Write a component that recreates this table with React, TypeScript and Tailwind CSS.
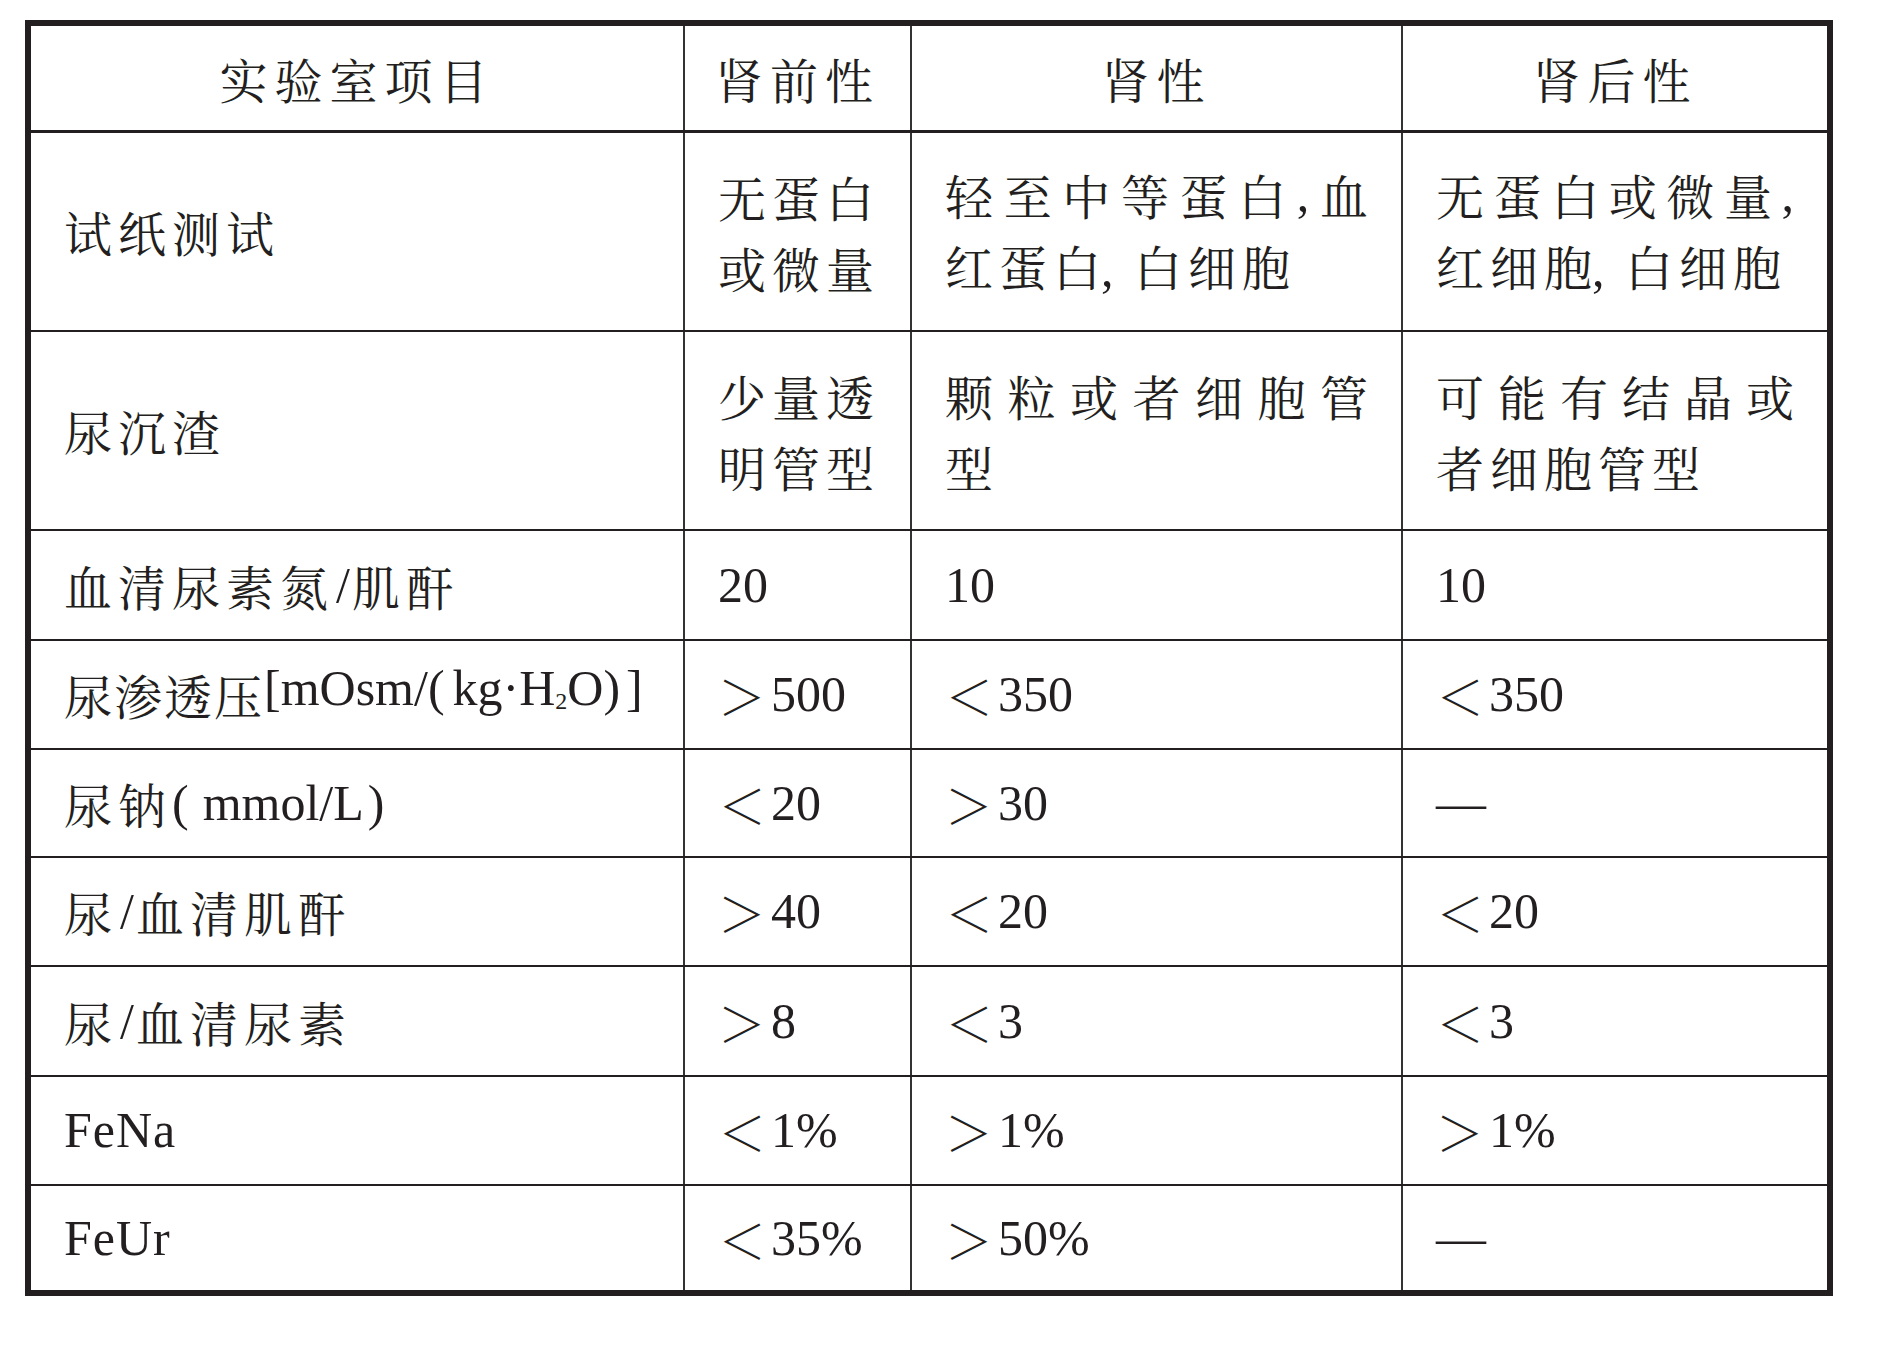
import React from "react";

const LAT = "font-['Liberation_Serif',serif] tracking-normal text-[50px]";
const C1 = "w-[654px] shrink-0 border-r-2 border-[#333333] flex items-center pl-[33px] whitespace-nowrap";
const C2 = "w-[227px] shrink-0 border-r-2 border-[#333333] flex items-center pl-[33px] whitespace-nowrap";
const C3 = "w-[491px] shrink-0 border-r-2 border-[#333333] flex items-center pl-[33px] pr-[33px] whitespace-nowrap";
const C4 = "flex-1 flex items-center pl-[33px] pr-[33px] whitespace-nowrap";

function Lt() {
  return <span className="inline-block w-[53px] tracking-normal">＜</span>;
}
function Gt() {
  return <span className="inline-block w-[53px] tracking-normal">＞</span>;
}
function N({ children }: { children: React.ReactNode }) {
  return <span className={LAT}>{children}</span>;
}
function Comma() {
  return <span className={LAT + " inline-block w-[33px]"}>,</span>;
}
function J({ t }: { t: string }) {
  return (
    <div className="flex w-full justify-between tracking-normal">
      {[...t].map((ch, i) =>
        ch === "," ? (
          <span key={i} className={LAT}>,</span>
        ) : (
          <span key={i}>{ch}</span>
        )
      )}
    </div>
  );
}
function Slash() {
  return <span className={LAT + " mx-[2px]"}>/</span>;
}

function Row({ cls, children }: { cls: string; children: React.ReactNode }) {
  return <div className={"flex " + cls}>{children}</div>;
}

export default function App() {
  return (
    <div className="w-[1880px] h-[1347px] bg-white pt-[20px] pl-[25px] text-[#231f20]">
      <div className="w-[1808px] border-[6px] border-[#231f20] font-['Noto_Serif_CJK_SC','Noto_Sans_CJK_SC',sans-serif] text-[48px] leading-[71px] tracking-[6px]">
        <Row cls="h-[107px] border-b-[3px] border-[#231f20] tracking-[7px]">
          <div className="w-[654px] shrink-0 border-r-2 border-[#333333] flex items-center justify-center">实验室项目</div>
          <div className="w-[227px] shrink-0 border-r-2 border-[#333333] flex items-center justify-center">肾前性</div>
          <div className="w-[491px] shrink-0 border-r-2 border-[#333333] flex items-center justify-center">肾性</div>
          <div className="flex-1 flex items-center justify-center">肾后性</div>
        </Row>

        <Row cls="h-[199px] border-b-2 border-[#231f20]">
          <div className={C1}>试纸测试</div>
          <div className={C2}>
            <div>
              <div>无蛋白</div>
              <div>或微量</div>
            </div>
          </div>
          <div className={C3}>
            <div className="w-full">
              <J t="轻至中等蛋白,血" />
              <div>
                红蛋<span className="tracking-normal">白</span>
                <Comma />
                白细胞
              </div>
            </div>
          </div>
          <div className={C4}>
            <div className="w-full">
              <J t="无蛋白或微量," />
              <div>
                红细<span className="tracking-normal">胞</span>
                <Comma />
                白细胞
              </div>
            </div>
          </div>
        </Row>

        <Row cls="h-[199px] border-b-2 border-[#231f20]">
          <div className={C1}>尿沉渣</div>
          <div className={C2}>
            <div>
              <div>少量透</div>
              <div>明管型</div>
            </div>
          </div>
          <div className={C3}>
            <div className="w-full">
              <J t="颗粒或者细胞管" />
              <div>型</div>
            </div>
          </div>
          <div className={C4}>
            <div className="w-full">
              <J t="可能有结晶或" />
              <div>者细胞管型</div>
            </div>
          </div>
        </Row>

        <Row cls="h-[110px] border-b-2 border-[#231f20]">
          <div className={C1}>
            血清尿素氮<Slash />肌酐
          </div>
          <div className={C2}>
            <N>20</N>
          </div>
          <div className={C3}>
            <N>10</N>
          </div>
          <div className={C4}>
            <N>10</N>
          </div>
        </Row>

        <Row cls="h-[109px] border-b-2 border-[#231f20]">
          <div className={C1}>
            <span className="tracking-[2px]">尿渗透压</span>
            <span className={LAT}>
              [mOsm/<span className="mr-[8px]">(</span>kg·H<span className="text-[24px] align-[-4px]">2</span>O)<span className="ml-[6px]">]</span>
            </span>
          </div>
          <div className={C2}>
            <Gt />
            <N>500</N>
          </div>
          <div className={C3}>
            <Lt />
            <N>350</N>
          </div>
          <div className={C4}>
            <Lt />
            <N>350</N>
          </div>
        </Row>

        <Row cls="h-[108px] border-b-2 border-[#231f20]">
          <div className={C1}>
            尿钠
            <span className={LAT}>
              <span className="mr-[14px]">(</span>mmol/L<span className="ml-[4px]">)</span>
            </span>
          </div>
          <div className={C2}>
            <Lt />
            <N>20</N>
          </div>
          <div className={C3}>
            <Gt />
            <N>30</N>
          </div>
          <div className={C4}>
            <N>—</N>
          </div>
        </Row>

        <Row cls="h-[109px] border-b-2 border-[#231f20]">
          <div className={C1}>
            尿<Slash />血清肌酐
          </div>
          <div className={C2}>
            <Gt />
            <N>40</N>
          </div>
          <div className={C3}>
            <Lt />
            <N>20</N>
          </div>
          <div className={C4}>
            <Lt />
            <N>20</N>
          </div>
        </Row>

        <Row cls="h-[110px] border-b-2 border-[#231f20]">
          <div className={C1}>
            尿<Slash />血清尿素
          </div>
          <div className={C2}>
            <Gt />
            <N>8</N>
          </div>
          <div className={C3}>
            <Lt />
            <N>3</N>
          </div>
          <div className={C4}>
            <Lt />
            <N>3</N>
          </div>
        </Row>

        <Row cls="h-[109px] border-b-2 border-[#231f20]">
          <div className={C1}>
            <span className="font-['Liberation_Serif',serif] text-[50px] tracking-[1px]">FeNa</span>
          </div>
          <div className={C2}>
            <Lt />
            <N>1%</N>
          </div>
          <div className={C3}>
            <Gt />
            <N>1%</N>
          </div>
          <div className={C4}>
            <Gt />
            <N>1%</N>
          </div>
        </Row>

        <Row cls="h-[104px]">
          <div className={C1}>
            <span className="font-['Liberation_Serif',serif] text-[50px] tracking-[1px]">FeUr</span>
          </div>
          <div className={C2}>
            <Lt />
            <N>35%</N>
          </div>
          <div className={C3}>
            <Gt />
            <N>50%</N>
          </div>
          <div className={C4}>
            <N>—</N>
          </div>
        </Row>
      </div>
    </div>
  );
}
